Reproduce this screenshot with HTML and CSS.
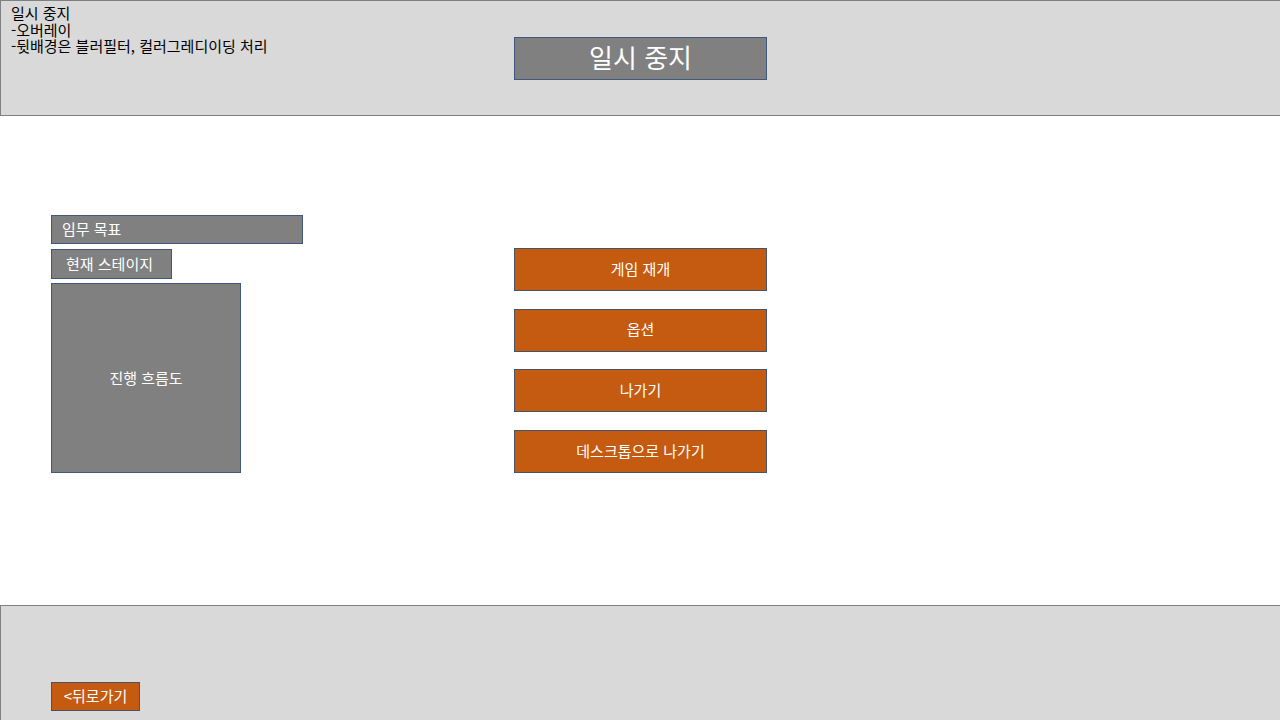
FILE: index.html
```html
<!DOCTYPE html>
<html lang="ko">
<head>
<meta charset="utf-8">
<title>일시 중지</title>
<link rel="stylesheet" href="styles.css">
</head>
<body>
<div class="page">
  <header class="top">
    <div class="notes">
      <div class="line">일시 중지</div>
      <div class="line">-오버레이</div>
      <div class="line">-뒷배경은 블러필터, 컬러그레디이딩 처리</div>
    </div>
    <div class="title">일시 중지</div>
    <div></div>
  </header>
  <main class="main">
    <section class="left">
      <div class="box objective">임무 목표</div>
      <div class="box stage">현재 스테이지</div>
      <div class="box flow">진행 흐름도</div>
    </section>
    <nav class="menu">
      <div class="btn">게임 재개</div>
      <div class="btn">옵션</div>
      <div class="btn">나가기</div>
      <div class="btn">데스크톱으로 나가기</div>
    </nav>
  </main>
  <footer class="bottom">
    <div class="back">&lt;뒤로가기</div>
  </footer>
</div>
</body>
</html>
```

FILE: styles.css
```css
* { box-sizing: border-box; }
html, body { margin: 0; padding: 0; }
body {
  font-family: "Noto Sans CJK KR", "Noto Sans", sans-serif;
  font-size: 15px;
  color: #000;
  background: #fff;
}
.page {
  width: 1280px;
  height: 720px;
  display: flex;
  flex-direction: column;
  overflow: hidden;
}
.top {
  height: 116px;
  background: #d9d9d9;
  border: 1px solid #7f7f7f;
  border-right: none;
  display: grid;
  grid-template-columns: 513px 253px 1fr;
}
.notes {
  padding: 4px 0 0 10px;
  font-size: 15px;
}
.line {
  height: 16.5px;
  line-height: 16.5px;
  white-space: nowrap;
}
.title {
  margin-top: 36px;
  height: 43px;
  padding-bottom: 3px;
  background: #808080;
  border: 1px solid #40587c;
  color: #fff;
  font-size: 26px;
  display: flex;
  align-items: center;
  justify-content: center;
  line-height: 1;
}
.main {
  flex: 1;
  display: grid;
  grid-template-columns: 514px 253px;
  align-items: start;
}
.left {
  padding: 99px 0 0 51px;
  display: flex;
  flex-direction: column;
  align-items: flex-start;
}
.box {
  background: #808080;
  border: 1px solid #40587c;
  color: #fff;
  font-size: 15px;
  line-height: 1;
  padding-bottom: 2px;
  display: flex;
  align-items: center;
}
.objective {
  width: 252px;
  height: 29px;
  padding-left: 10px;
}
.stage {
  margin-top: 5px;
  width: 121px;
  height: 30px;
  padding-left: 14px;
}
.flow {
  margin-top: 4px;
  width: 190px;
  height: 190px;
  justify-content: center;
}
.menu {
  padding-top: 132px;
  display: flex;
  flex-direction: column;
  gap: 17.7px;
}
.btn {
  height: 43px;
  padding-bottom: 3px;
  background: #c55a11;
  border: 1px solid #44546a;
  color: #fff;
  display: flex;
  align-items: center;
  justify-content: center;
  font-size: 15px;
  line-height: 1;
}
.bottom {
  height: 115px;
  background: #d9d9d9;
  border-top: 1px solid #7f7f7f;
  border-left: 1px solid #7f7f7f;
  padding: 76px 0 0 50px;
}
.back {
  width: 89px;
  height: 29px;
  padding-bottom: 2px;
  background: #c55a11;
  border: 1px solid #44546a;
  color: #fff;
  display: flex;
  align-items: center;
  justify-content: center;
  font-size: 15px;
  line-height: 1;
}
```
